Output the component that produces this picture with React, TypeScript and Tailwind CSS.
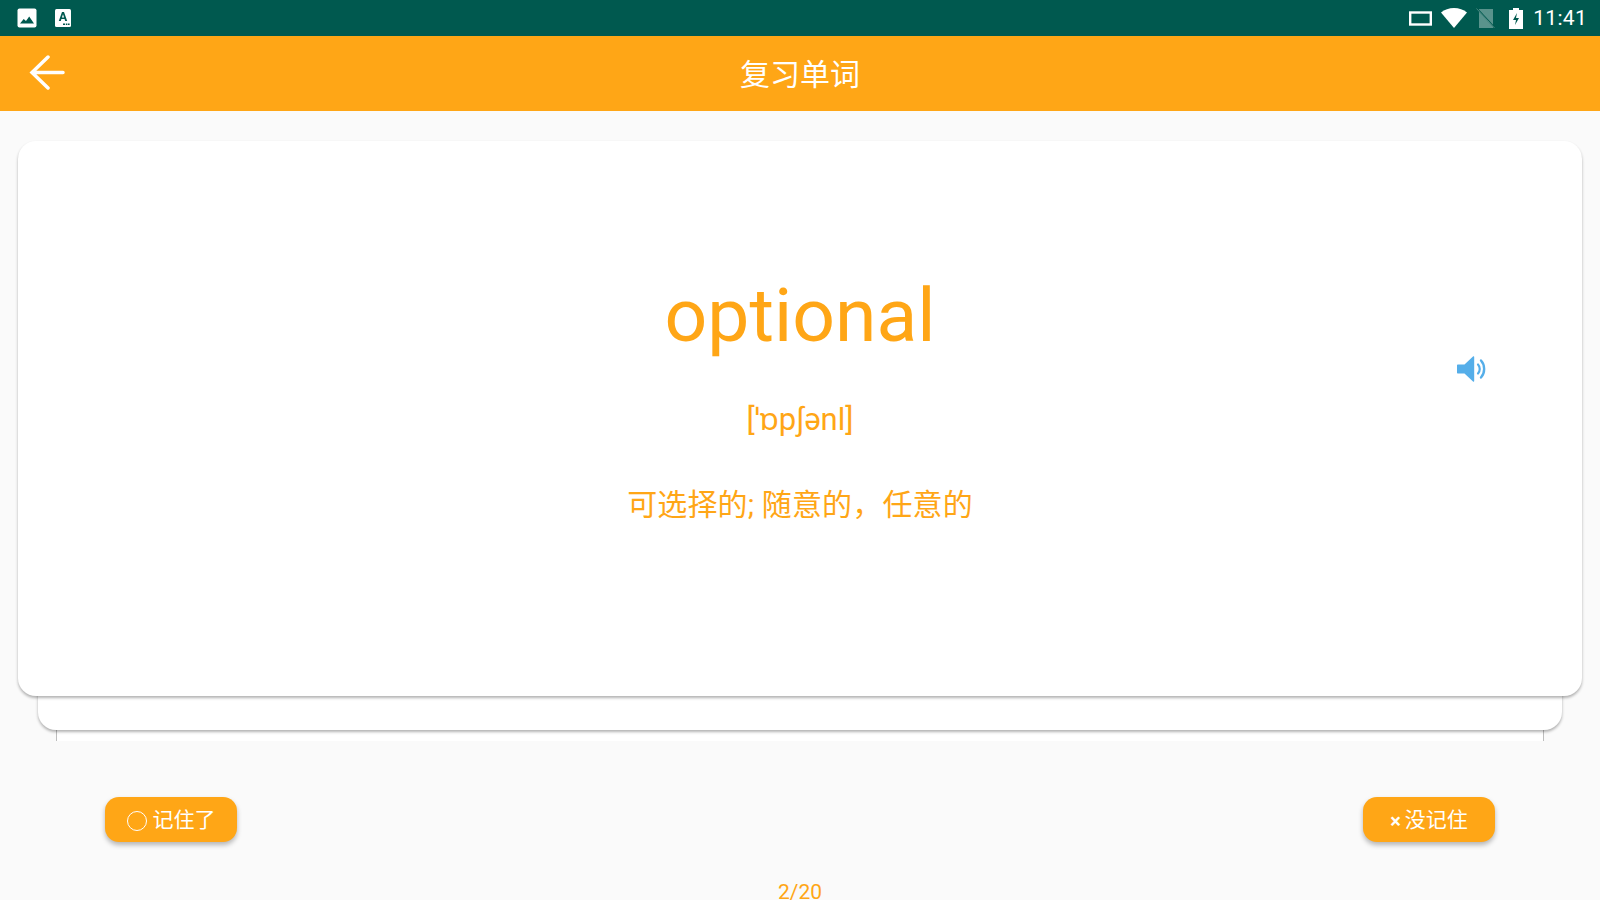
import React from "react";

const cjk = '"Roboto","Noto Sans CJK SC",sans-serif';

function Speaker() {
  return (
    <svg width="32" height="32" viewBox="0 0 32 32" fill="none">
      <path d="M1 11.500h6.500L16 3.500c.6-.5 1.200-.2 1.200.6v23.800c0 .8-.6 1.100-1.200.6L7.500 20.500H1c-.6 0-1-.4-1-1v-7c0-.6.400-1 1-1z" fill="#55AEE9" />
      <path d="M21 11.500c2.300 2.500 2.300 6.500 0 9" stroke="#55AEE9" strokeWidth="2.200" strokeLinecap="round" />
      <path d="M24 7.500c4.200 4.600 4.200 12.400 0 17" stroke="#55AEE9" strokeWidth="2.400" strokeLinecap="round" />
    </svg>
  );
}

function StatusLeft() {
  return (
    <div className="flex items-center gap-[18px]">
      <svg width="20" height="20" viewBox="0 0 20 20">
        <rect x="0.500" y="0.500" width="19" height="19" rx="2" fill="#fff" />
        <path d="M3 15.500 6.700 11l2.300 2 3.200-4.500 4.800 7z" fill="#00594F" />
      </svg>
      <svg width="16" height="18" viewBox="0 0 16 18">
        <rect width="16" height="18" rx="1.500" fill="#fff" />
        <path d="M3.800 12 7 3h2l3.200 9h-2l-.6-2H6.400l-.6 2zm3.100-3.600h2.200L8 5.200z" fill="#00594F" />
        <rect x="8" y="14.500" width="2" height="1.500" fill="#00594F" />
        <rect x="10.800" y="14.500" width="1.600" height="1.500" fill="#00594F" />
        <rect x="13" y="14.500" width="1.600" height="1.500" fill="#00594F" />
      </svg>
    </div>
  );
}

function StatusRight() {
  return (
    <div className="flex items-center text-white">
      <svg width="23" height="15" viewBox="0 0 23 15" fill="none" className="mr-[9px]">
        <rect x="1.200" y="1.500" width="20.600" height="12" stroke="#fff" strokeWidth="2.400" />
      </svg>
      <svg width="26" height="20" viewBox="0 0 26 20" className="mr-[9px]">
        <path d="M0 4.500C3.500 1.700 8 0 13 0s9.500 1.700 13 4.500L13 20z" fill="#fff" />
      </svg>
      <svg width="20" height="21" viewBox="0 0 20 21" className="mr-[13px]">
        <path d="M3 1h14v19H3z" fill="#fff" fillOpacity="0.35" />
        <path d="M1 0.500 19 20" stroke="#00594F" strokeWidth="1.500" />
        <path d="M0.500 0.500 18.500 20" stroke="#fff" strokeOpacity="0.35" strokeWidth="0.800" />
      </svg>
      <svg width="14" height="21" viewBox="0 0 14 21" className="mr-[10px]">
        <path fillRule="evenodd" d="M4 0h6v2h4v19H0V2h4zM8 5 4 12h3l-1 5 4-7H7z" fill="#fff" />
      </svg>
      <span className="text-[21px] leading-none tracking-[0.3px]" style={{ fontFamily: "Roboto, sans-serif" }}>11:41</span>
    </div>
  );
}

function Btn({ children }: { children: React.ReactNode }) {
  return (
    <button className="flex h-[45px] w-[132px] items-center justify-center rounded-[14px] bg-[#FFA616] pt-[2px] text-[21px] text-white shadow-[0_3px_5px_rgba(0,0,0,0.28)]">
      {children}
    </button>
  );
}

export default function App() {
  return (
    <div className="flex h-[900px] w-[1600px] flex-col overflow-hidden bg-[#FAFAFA]" style={{ fontFamily: cjk }}>
      <div className="flex h-[36px] shrink-0 items-center justify-between bg-[#00594F] pl-[17px] pr-[13px]">
        <StatusLeft />
        <StatusRight />
      </div>
      <div className="relative flex h-[75px] shrink-0 items-center justify-center bg-[#FFA616] pt-[3px]">
        <svg width="36" height="36" viewBox="0 0 36 36" fill="none" className="absolute left-[29px] top-[18px]">
          <path d="M19 3 3 18.500 19 34M3 18.500H34" stroke="#fff" strokeWidth="3.500" strokeLinecap="round" strokeLinejoin="miter" />
        </svg>
        <span className="text-[30px] leading-none text-white">复习单词</span>
      </div>

      <div className="h-[630px] shrink-0 overflow-hidden pt-[30px]">
        <div className="relative z-20 mx-[18px] flex h-[555px] flex-col items-center rounded-[18px] bg-white shadow-[0_2px_3px_rgba(0,0,0,0.3)]">
          <div className="mt-[126px] text-[75px] leading-[96px] text-[#FFA616]">optional</div>
          <div className="mt-[37px] text-[31px] leading-[40px] text-[#FFA616]" style={{ fontFamily: '"Roboto","Noto Sans",sans-serif' }}>[ˈɒpʃənl]</div>
          <div className="mt-[45px] text-[30px] leading-[40px] tracking-[0.15px] text-[#FFA616]">可选择的; 随意的，任意的</div>
          <div className="absolute left-[1439px] top-[212px]">
            <Speaker />
          </div>
        </div>
        <div className="relative z-10 mx-[38px] -mt-[20px] h-[54px] rounded-[18px] bg-white shadow-[0_2px_3px_rgba(0,0,0,0.3)]" />
        <div className="mx-[56px] -mt-[20px] h-[60px] border-x border-[#BDBDBD] bg-white" />
      </div>

      <div className="mt-[56px] flex shrink-0 justify-between pl-[105px] pr-[105px]">
        <Btn>
          <span className="mr-[6px] h-[20px] w-[20px] rounded-full border border-white" />
          记住了
        </Btn>
        <Btn>
          <span className="mr-[4px] text-[20px] font-bold leading-none">×</span>
          没记住
        </Btn>
      </div>
      <div className="mt-[38px] shrink-0 text-center text-[21px] leading-[24px] text-[#FFA616]">2/20</div>
    </div>
  );
}
